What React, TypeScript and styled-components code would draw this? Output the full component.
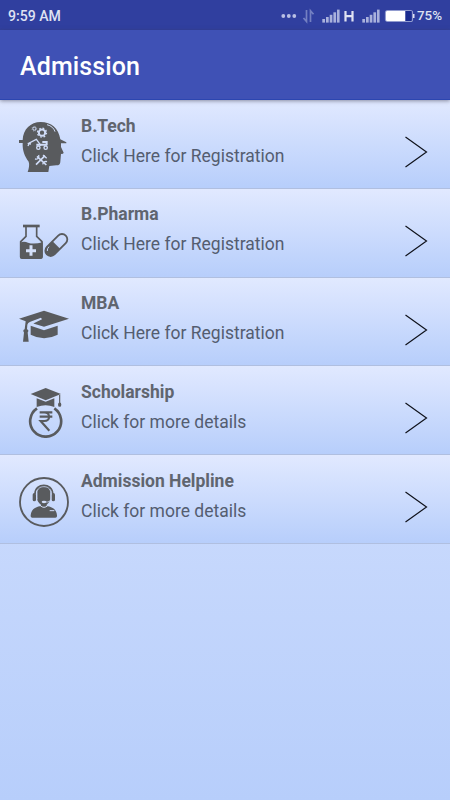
import React from "react";
import styled, { createGlobalStyle } from "styled-components";

const GlobalStyle = createGlobalStyle`
  * { box-sizing: border-box; }
  body { margin: 0; font-family: Roboto, sans-serif; }
`;

const Screen = styled.div`
  width: 450px;
  height: 800px;
  overflow: hidden;
  display: flex;
  flex-direction: column;
  background: #b7cefb;
`;

const StatusBar = styled.div`
  height: 30px;
  flex: none;
  display: flex;
  align-items: center;
  justify-content: space-between;
  padding: 1px 8px 0;
  background: #303f9f;
  color: #dfe2f2;
  font-size: 14px;
  font-weight: 500;
  line-height: 16px;
`;

const StatusIcons = styled.div`
  display: flex;
  align-items: center;
  height: 16px;
`;

const StatusText = styled.span<{ $width?: number; $size?: number }>`
  display: block;
  width: ${(p) => (p.$width ? `${p.$width}px` : "auto")};
  font-size: ${(p) => p.$size ?? 14}px;
  white-space: nowrap;
`;

const StatusGlyph = styled.svg`
  display: block;
  flex: none;
`;

const AppBar = styled.header`
  position: relative;
  height: 70px;
  flex: none;
  display: flex;
  align-items: center;
  padding: 5px 20px 0;
  background: #3f51b5;
  border-bottom: 1px solid #2c46b0;
  box-shadow: 0 1px 4px rgba(60, 60, 80, 0.55);
`;

const Title = styled.h1`
  margin: 0;
  color: #fff;
  font-size: 25px;
  font-weight: 500;
  line-height: 30px;
  letter-spacing: 0.12px;
`;

const Content = styled.main`
  flex: 1;
  background: linear-gradient(#e1e9ff, #b7cefb);
`;

const Row = styled.div`
  height: 88.75px;
  display: flex;
  align-items: flex-start;
  padding: 0 22px 0 19px;
  background: linear-gradient(#e1e9ff, #b7cefb);
  border-bottom: 1px solid #b0bfe0;
`;

const RowIcon = styled.svg`
  display: block;
  flex: none;
  width: 50px;
  height: 50px;
  margin-top: 22px;
  color: #595b5e;
`;

const RowText = styled.div`
  flex: 1;
  padding: 15.5px 0 0 12px;
  display: flex;
  flex-direction: column;
  gap: 9px;
  font-size: 17.5px;
  line-height: 21px;
`;

const RowTitle = styled.div`
  font-weight: 700;
  color: #60656f;
`;

const RowSubtitle = styled.div`
  color: #545d70;
`;

const Chevron = styled.svg`
  display: block;
  flex: none;
  margin-top: 36px;
`;

const EngineerIcon = () => (
  <RowIcon viewBox="27 30 150 150">
    <path
      fill="currentColor"
      d="M27 84h11C39 52 62 30 92 30c32 0 54 19 59 52l18 9v3h-16v11l8 17q0 4-8 4l-2 23c0 7-4 11-12 11l-21 2-3 18H53c4-12 6-22 3-31C44 133 37 116 38 93H27z"
    />
    <g fill="none" stroke="#d0dcf7">
      <circle cx="96" cy="62" r="9.500" strokeWidth="6" />
      <circle cx="96" cy="62" r="13.500" strokeWidth="4" strokeDasharray="5.300 5.300" />
      <circle cx="73" cy="50" r="4.500" strokeWidth="3" />
      <circle cx="73" cy="50" r="7" strokeWidth="2" strokeDasharray="2.750 2.750" />
      <path d="M111 38q19 5 24 21" strokeWidth="3" />
      <path d="M54 102l4-9 21-11 14 19M53 94l10 2" strokeWidth="4" />
      <path d="M79 98h32M97 90h13v10" strokeWidth="6" />
      <circle cx="85" cy="107" r="5" strokeWidth="4" />
      <circle cx="107" cy="107" r="5" strokeWidth="4" />
      <path d="M81 133l28 26M105 131l-27 27" strokeWidth="5" />
      <path d="M75 141c8 2 13-3 11-12M98 157c2-7 7-10 13-8M99 129l11 10" strokeWidth="4" />
    </g>
  </RowIcon>
);

const PharmaIcon = () => (
  <RowIcon viewBox="27 2 150 150">
    <g fill="none" stroke="currentColor">
      <path d="M43 47h42" strokeWidth="8" strokeLinecap="square" />
      <path d="M48 49v29L32 94v46q0 3 3 3h58q3 0 3-3V94L80 78V49" strokeWidth="5" />
    </g>
    <path fill="currentColor" d="M30 97q12-5 24 0 16 6 44-1v43q0 7-7 7H37q-7 0-7-7z" />
    <path d="M63 105v31M48 121h30" stroke="#d3dffa" strokeWidth="9" />
    <g transform="rotate(-45 139 104)">
      <rect x="99" y="88" width="80" height="32" rx="16" fill="none" stroke="currentColor" strokeWidth="5.500" />
      <path fill="currentColor" d="M139 88h-24a16 16 0 0 0 0 32h24z" />
    </g>
    <path d="M112 122q-1-7 5-13" fill="none" stroke="#c1d2f8" strokeWidth="3" />
  </RowIcon>
);

const GraduationIcon = () => (
  <RowIcon viewBox="27 -1.5 150 150">
    <path
      fill="currentColor"
      d="M27 55l75-24 75 24-75 24-32-10 26-13-3-4-32 12q-8 3-9 9l-1 13q7 3 2 10l3 28H39l3-28q-5-7 2-10l3-24z"
    />
    <path fill="currentColor" d="M62 76l40 13 41-13v27q-41 21-81 0z" />
  </RowIcon>
);

const ScholarshipIcon = () => (
  <RowIcon viewBox="12 25 150 150">
    <path
      d="M66 86a46.500 46.500 0 1 0 52 0"
      fill="none"
      stroke="currentColor"
      strokeWidth="8"
    />
    <path fill="currentColor" d="M47 43l45-18 46 18-46 19z" />
    <path fill="currentColor" d="M65 56l27 10 26-10v26q-26-10-53 0z" />
    <path d="M134 46v25" stroke="currentColor" strokeWidth="3.500" />
    <ellipse cx="134" cy="75" rx="5" ry="6.500" fill="currentColor" />
    <path
      d="M74 98h38M74 111h38M76 98h12c19 0 19 26 0 26H77l26 29"
      fill="none"
      stroke="currentColor"
      strokeWidth="6.500"
    />
  </RowIcon>
);

const HelplineIcon = () => (
  <RowIcon viewBox="27 21 150 150">
    <circle cx="102" cy="96" r="72" fill="none" stroke="currentColor" strokeWidth="5.500" />
    <path
      fill="currentColor"
      d="M81 62q2-15 20-15t21 15v24q-3 12-12 18v4q29 4 31 28v3q0 4-5 4H67q-5 0-5-4v-3q2-24 31-28v-4q-12-7-12-22z"
    />
    <path d="M75 72c0-35 53-35 53 0" fill="none" stroke="currentColor" strokeWidth="5" />
    <rect x="68" y="69" width="10" height="25" rx="5" fill="currentColor" />
    <rect x="125" y="69" width="10" height="25" rx="5" fill="currentColor" />
    <path d="M81 88V68c0-24 41-24 41 0v20q0 8-10 8H98" fill="none" stroke="#c7d5f4" strokeWidth="2.500" />
    <ellipse cx="102" cy="96" rx="7" ry="3.500" fill="#d3def8" />
    <path d="M91 107q11 10 22 0M119 122h14" fill="none" stroke="#d3def8" strokeWidth="3" />
  </RowIcon>
);

const SignalBars = () => (
  <StatusGlyph width="18" height="14" viewBox="0 0 18 14" fill="#a9b1dc">
    <rect x="0.3" y="10" width="2.7" height="3.6" />
    <rect x="4" y="8" width="2.7" height="5.6" />
    <rect x="7.7" y="5.8" width="2.7" height="7.8" />
    <rect x="11.4" y="3.3" width="2.7" height="10.3" />
    <rect x="15" y="0.6" width="2.6" height="13" />
  </StatusGlyph>
);

const ITEMS = [
  { title: "B.Tech", subtitle: "Click Here for Registration", Icon: EngineerIcon },
  { title: "B.Pharma", subtitle: "Click Here for Registration", Icon: PharmaIcon },
  { title: "MBA", subtitle: "Click Here for Registration", Icon: GraduationIcon },
  { title: "Scholarship", subtitle: "Click for more details", Icon: ScholarshipIcon },
  { title: "Admission Helpline", subtitle: "Click for more details", Icon: HelplineIcon },
];

export default function App() {
  return (
    <Screen>
      <GlobalStyle />
      <StatusBar>
        <StatusText $size={14.1}>9:59 AM</StatusText>
        <StatusIcons>
          <StatusGlyph width="41" height="16" viewBox="0 0 41 16">
            <g fill="#b9c0e4">
              <circle cx="2.3" cy="8" r="1.9" />
              <circle cx="7.8" cy="8" r="1.9" />
              <circle cx="13.3" cy="8" r="1.9" />
            </g>
            <path d="M25.500 2v11.500l-3-3.500M29.500 14V2.800l3 3.500" fill="none" stroke="#7480c2" strokeWidth="1.7" />
          </StatusGlyph>
          <SignalBars />
          <StatusGlyph width="22" height="16" viewBox="0 0 22 16">
            <path d="M5.500 3v10.500M12.500 3v10.500M5.500 8.200h7" stroke="#dfe2f2" strokeWidth="2.2" />
          </StatusGlyph>
          <SignalBars />
          <StatusGlyph width="37" height="16" viewBox="0 0 37 16">
            <rect x="5.500" y="2.500" width="27" height="11" rx="2" fill="#303f9f" stroke="#929ccf" strokeWidth="1.2" />
            <path d="M7 3H25.500v10H7q-1 0-1-1V4q0-1 1-1z" fill="#fff" />
            <path d="M25.500 3h6v10h-6z" fill="#1a2b8f" />
            <path d="M33 6h1.500v4H33z" fill="#dfe2f2" />
          </StatusGlyph>
          <StatusText $width={25} $size={13.4}>75%</StatusText>
        </StatusIcons>
      </StatusBar>
      <AppBar>
        <Title>Admission</Title>
      </AppBar>
      <Content>
        {ITEMS.map(({ title, subtitle, Icon }) => (
          <Row key={title}>
            <Icon />
            <RowText>
              <RowTitle>{title}</RowTitle>
              <RowSubtitle>{subtitle}</RowSubtitle>
            </RowText>
            <Chevron width="23" height="32" viewBox="0 0 23 32">
              <path d="M0.500 1L21.500 16L0.500 31" fill="none" stroke="#10131c" strokeWidth="1.2" />
            </Chevron>
          </Row>
        ))}
      </Content>
    </Screen>
  );
}
